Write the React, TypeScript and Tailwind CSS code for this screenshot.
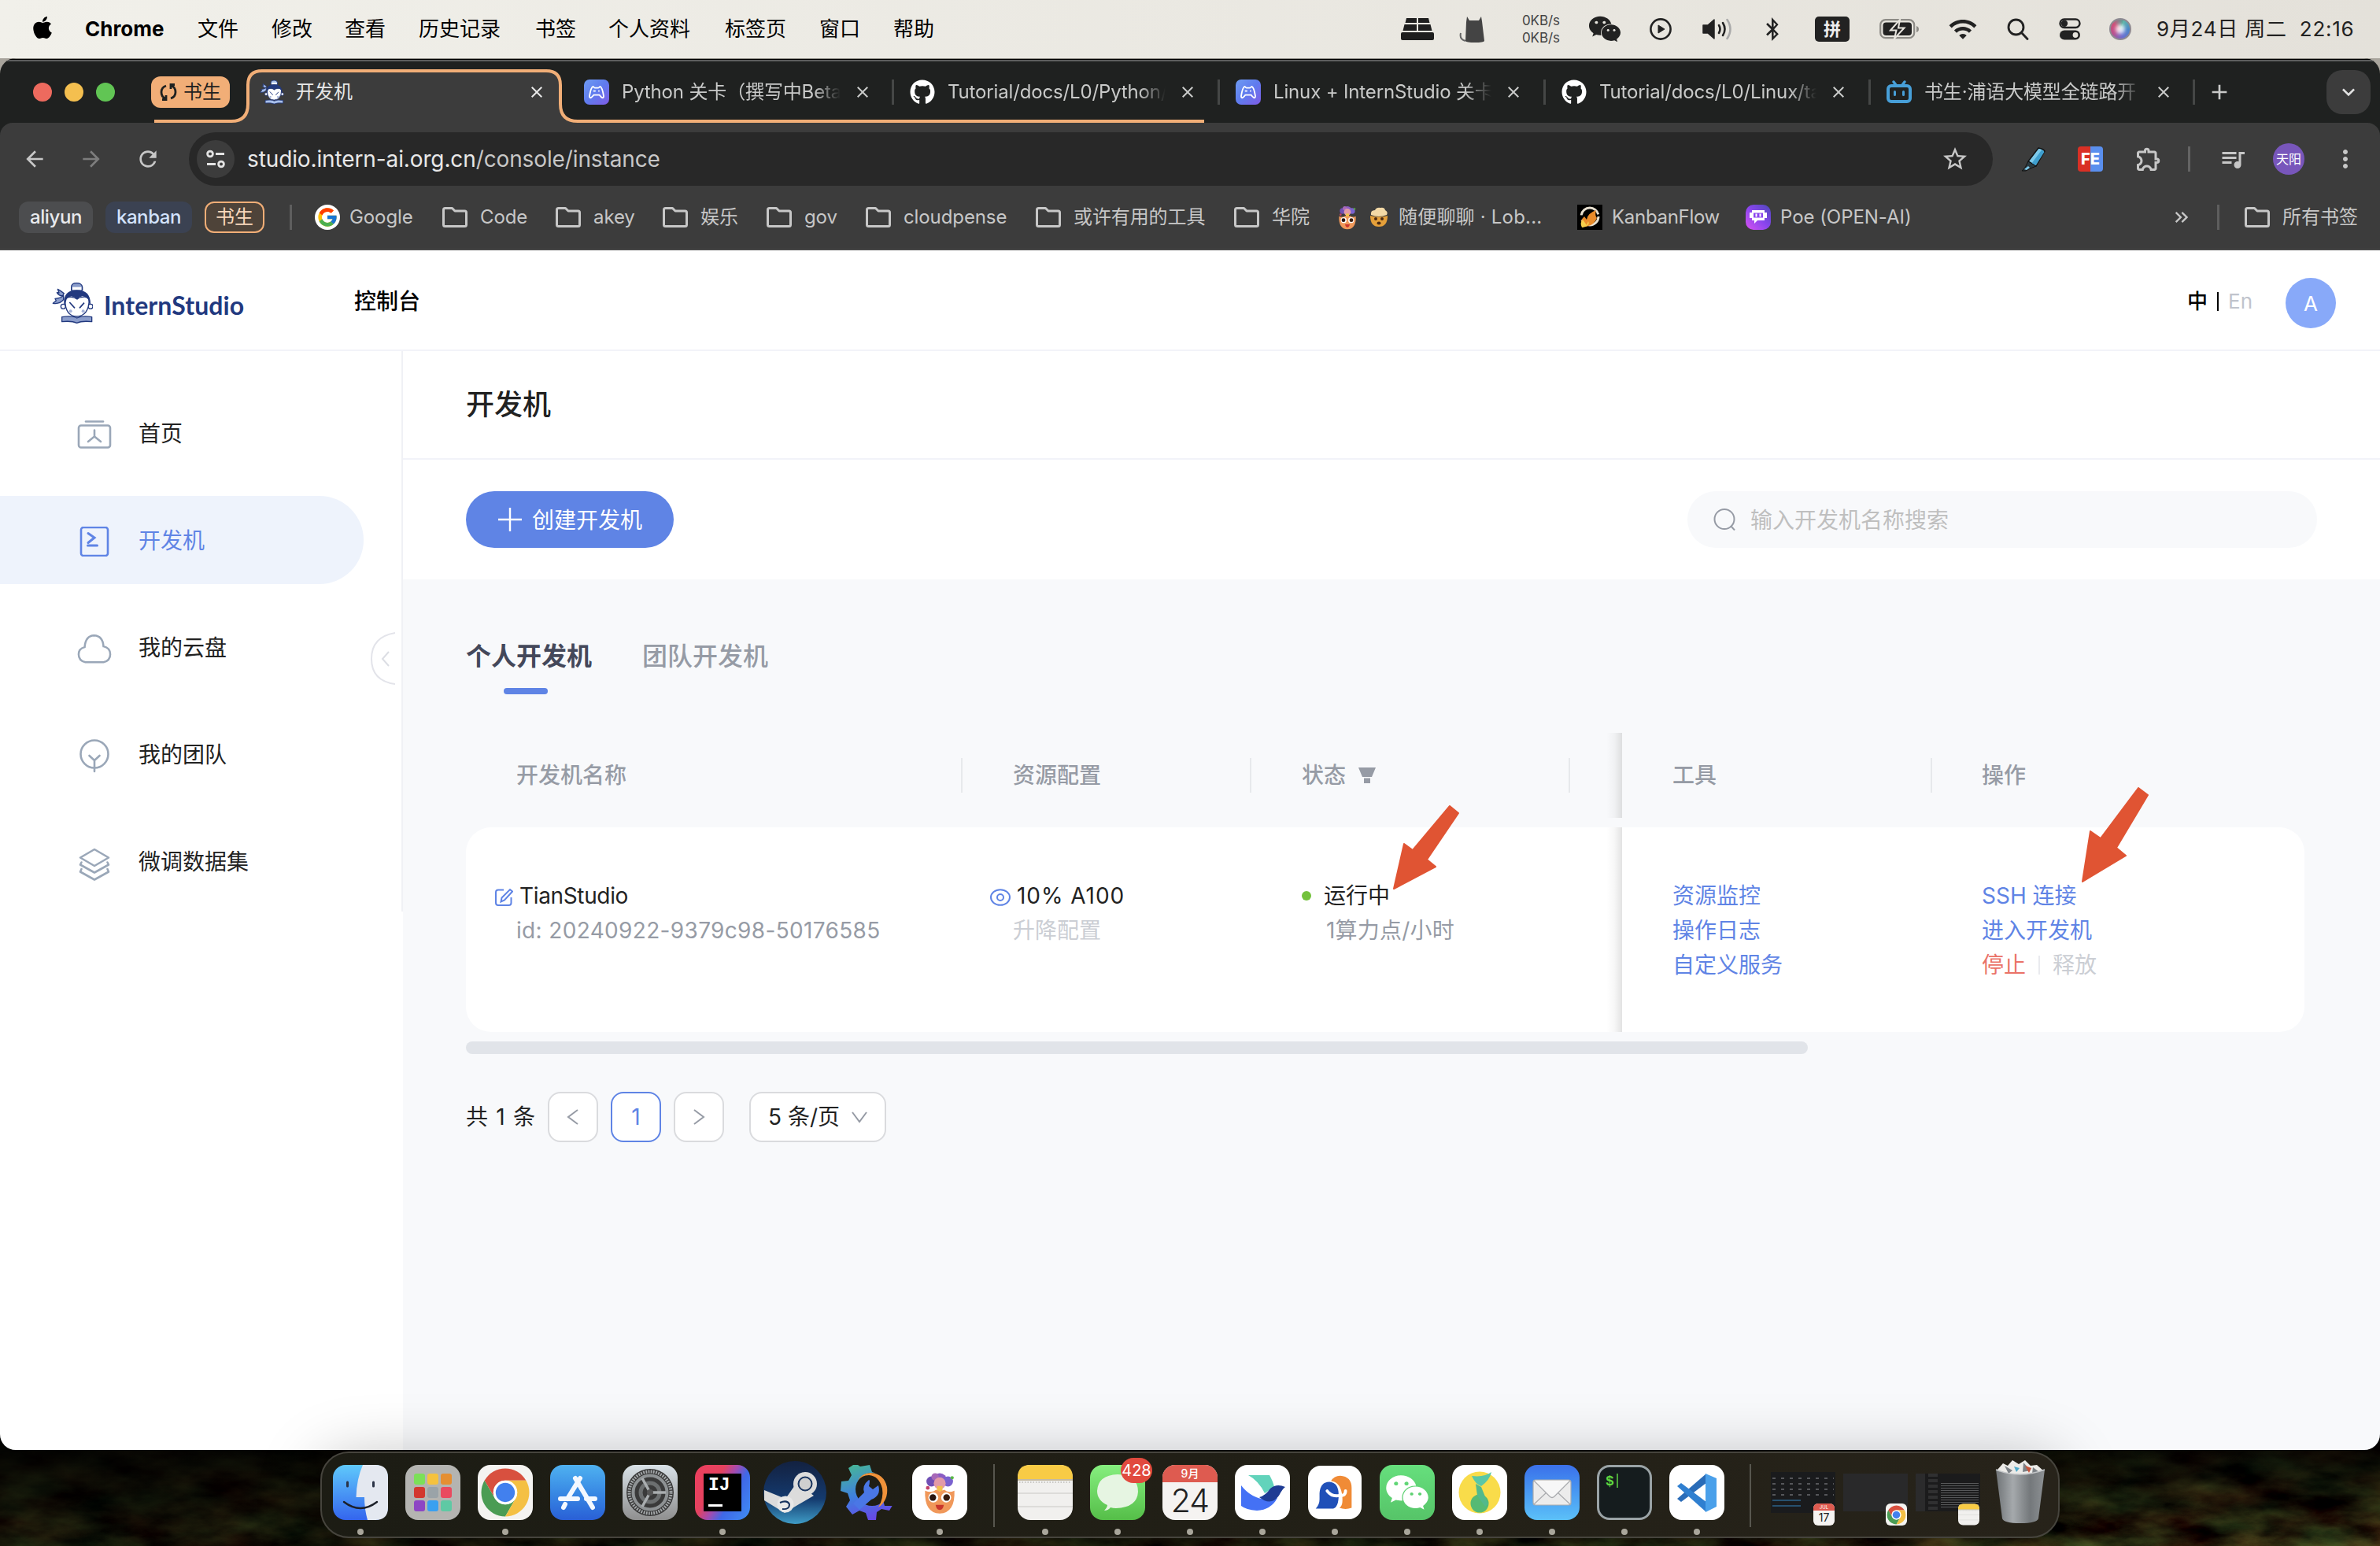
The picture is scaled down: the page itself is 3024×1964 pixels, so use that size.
import React from "react";
import type { ReactNode } from "react";
import { FaApple, FaGithub, FaWeixin, FaBluetoothB } from "react-icons/fa";
import { FcGoogle } from "react-icons/fc";
import {
  MdArrowBack,
  MdArrowForward,
  MdRefresh,
  MdClose,
  MdAdd,
  MdStarBorder,
  MdOutlineExtension,
  MdQueueMusic,
  MdMoreVert,
  MdKeyboardArrowDown,
  MdKeyboardDoubleArrowRight,
  MdWifi,
} from "react-icons/md";

/* ---------- shared drawings ---------- */

function Scholar({ className, light = false }: { className: string; light?: boolean }) {
  const band = light ? "#a9c0ea" : "#8b9dcb";
  return (
    <svg viewBox="30 40 156 162" className={className} fill="none" stroke="#22397f" strokeWidth="4" strokeLinejoin="round">
      <path d="M104 72v-12q0-15 20-15t22 15v12z" fill={band} />
      <path d="M108 60h34v12h-34z" fill="#fff" stroke="none" />
      <path d="M76 84q-12-10-24-16l5 14-8-1q8 14 22 12zM74 92q-8 10-32 12l4 8-12 10q26 4 40-14z" fill={band} />
      <circle cx="73" cy="134" r="9" fill="#fff" />
      <circle cx="177" cy="134" r="9" fill="#fff" />
      <path d="M80 108q0 62 44 64 46-2 48-64-10-14-24-10-14 0-22 8-10-8-22-8-16-2-24 10z" fill="#fff" />
      <path d="M78 124q-4-50 47-51 50 1 50 51l-6-20q-14-14-28-10-10 2-15 10-6-8-18-10-16-2-24 12z" fill="#22397f" />
      <path d="M97 118l20 22M153 120l-18 20" strokeWidth="5" />
      <circle cx="101" cy="152" r="6" fill="#a5b2d8" stroke="none" />
      <circle cx="149" cy="152" r="6" fill="#a5b2d8" stroke="none" />
      <path d="M68 174q40-6 57 4 20-10 57-4v18q-38-4-57 5-20-9-57-5z" fill={band} />
    </svg>
  );
}

function Folder() {
  return (
    <svg viewBox="0 0 32 26" className="h-[26px] w-8 shrink-0" fill="none" stroke="#c7c7c7" strokeWidth="3" strokeLinejoin="round">
      <path d="M1.500 4v18.500q0 2 2 2h25q2 0 2-2V7q0-2-2-2H16l-3.500-3.500H3.500q-2 0-2 2z" />
    </svg>
  );
}

function ChromeMark({ className }: { className: string }) {
  return (
    <svg viewBox="3 3 42 42" className={className}>
      <path d="M41.320 14A20 20 0 0 0 6.680 14L15.340 29A10 10 0 0 1 24 14Z" fill="#d8503f" />
      <path d="M6.680 14A20 20 0 0 0 24 44L32.660 29A10 10 0 0 1 15.340 29Z" fill="#4b9c54" />
      <path d="M24 44A20 20 0 0 0 41.320 14H24A10 10 0 0 1 32.660 29Z" fill="#f4c044" />
      <circle cx="24" cy="24" r="10" fill="#fff" />
      <circle cx="24" cy="24" r="8" fill="#4280ee" />
    </svg>
  );
}

function LobeFace({ className }: { className: string }) {
  return (
    <svg viewBox="0 0 48 48" className={className}>
      <circle cx="24" cy="11" r="8" fill="#8b5cc4" />
      <circle cx="15" cy="12" r="5.500" fill="#6f4fb5" />
      <circle cx="33" cy="12" r="5.500" fill="#7a62cf" />
      <circle cx="19" cy="7" r="4" fill="#a768b8" />
      <circle cx="24" cy="14" r="6.500" fill="#e29aa8" />
      <circle cx="11" cy="19" r="2" fill="#c2416a" />
      <circle cx="37.500" cy="8" r="1.800" fill="#58b847" />
      <path d="M21 17h6v6h-6z" fill="#f2c14a" />
      <path d="M8 22q8 3 12-1l4 2 5-2q4 4 11 1 1 24-16 25Q7 46 8 22z" fill="#f0985a" />
      <circle cx="17" cy="29.500" r="5.400" fill="#fff" />
      <circle cx="31" cy="29.500" r="5.400" fill="#fff" />
      <circle cx="16.500" cy="29.500" r="3.600" fill="#2a1510" />
      <circle cx="31.500" cy="29.500" r="3.600" fill="#3a1d10" />
      <path d="M19.500 37.500h9q-1 5.500-4.500 5.500t-4.500-5.500z" fill="#c9362c" />
    </svg>
  );
}

function GamePad() {
  return (
    <div className="flex size-8 shrink-0 items-center justify-center rounded-[7px] bg-linear-to-br from-[#6f9bf2] via-[#5f7bee] to-[#7d5be6]">
      <svg viewBox="0 0 24 20" className="h-[18px] w-6" fill="none" stroke="#fff" strokeWidth="2" strokeLinejoin="round" strokeLinecap="round">
        <path d="M7 2q1.500 2 2.500 2h5q1 0 2.500-2 3 1 5 13.500Q22 18.500 20 18q-2-1-4-4H8q-2 3-4 4-2 .5-2-2.500Q4 3 7 2z" />
        <path d="M8 8.500h2M15 8.500h.5" strokeWidth="1.800" />
      </svg>
    </div>
  );
}

function BiliTv() {
  return (
    <svg viewBox="0 0 32 32" className="size-8 shrink-0" fill="none" stroke="#479fd8" strokeLinecap="round">
      <path d="M9 3l3 4M23 3l-3 4" strokeWidth="3.500" />
      <rect x="2" y="8" width="28" height="20" rx="4" strokeWidth="4" />
      <path d="M10.500 15.500v4M21.500 15.500v4" strokeWidth="3" />
    </svg>
  );
}

/* ---------- menu bar ---------- */

const menus = [
  { label: "Chrome", cls: "w-[143px] font-bold" },
  { label: "文件", cls: "w-[94px]" },
  { label: "修改", cls: "w-[93px]" },
  { label: "查看", cls: "w-[94px]" },
  { label: "历史记录", cls: "w-[148px]" },
  { label: "书签", cls: "w-[93px]" },
  { label: "个人资料", cls: "w-[148px]" },
  { label: "标签页", cls: "w-[120px]" },
  { label: "窗口", cls: "w-[94px]" },
  { label: "帮助", cls: "w-[95px]" },
];

function MenuBar() {
  return (
    <div className="relative flex h-[74px] shrink-0 items-center bg-linear-to-r from-[#f1f0ea] to-[#e4e1da] pb-px text-[26px] whitespace-nowrap text-black">
      <div className="w-[108px] pl-[38px]">
        <FaApple className="-mt-1 size-8" />
      </div>
      {menus.map((m) => (
        <div key={m.label} className={"shrink-0 " + m.cls}>
          {m.label}
        </div>
      ))}
      <div className="ml-auto flex items-center text-[#222]">
        <div className="w-[74px]">
          <svg viewBox="0 0 42 28" className="h-7 w-[42px]" fill="#1e1e1e">
            <path d="M7 0h13v6H5.500zM22 0h13l1.500 6H22zM4.500 8H20v8H2.500zM22 8h15.500l2 8H22z" />
            <rect y="18" width="42" height="10" rx="2" />
          </svg>
        </div>
        <div className="w-[80px]">
          <svg viewBox="0 0 34 34" className="size-[34px]" fill="#444">
            <path d="M10 1l3 5h12l3-5 1 6 3 25q-1 2-12 2-11 0-12-2L9 8z" />
            <path d="M8 32Q0 30 2 22" fill="none" stroke="#666" strokeWidth="2" />
          </svg>
        </div>
        <div className="flex w-[86px] flex-col text-[17px] leading-[22px] tracking-[-0.1px] text-[#444]">
          <span>0KB/s</span>
          <span>0KB/s</span>
        </div>
        <div className="w-[76px]">
          <FaWeixin className="-ml-0.5 size-[42px]" />
        </div>
        <div className="w-[67px]">
          <svg viewBox="0 0 28 28" className="size-7" fill="none" stroke="#222" strokeWidth="2.600">
            <circle cx="14" cy="14" r="12.600" />
            <path d="M11 9l8 5-8 5z" fill="#222" strokeWidth="1" />
          </svg>
        </div>
        <div className="w-[80px]">
          <svg viewBox="0 0 38 28" className="h-7 w-[38px]" fill="none" stroke="#222" strokeWidth="2.600" strokeLinecap="round">
            <path d="M1 9h6l8-7v24l-8-7H1z" fill="#222" stroke="#222" strokeWidth="1.500" strokeLinejoin="round" />
            <path d="M21 9q3 5 0 10M26 6q5 8 0 16" />
            <path d="M31.500 2q8 12 0 24" stroke="#aaa" />
          </svg>
        </div>
        <div className="w-[63px]">
          <FaBluetoothB className="-ml-[3px] h-[30px] w-6" />
        </div>
        <div className="w-[82px]">
          <div className="flex h-8 w-11 items-center justify-center rounded-[5px] bg-[#222] text-[22px] leading-none font-bold text-[#eee]">拼</div>
        </div>
        <div className="w-[88px]">
          <svg viewBox="0 0 50 26" className="h-[26px] w-[50px]">
            <rect x="1.200" y="1.200" width="43" height="23" rx="6.500" fill="none" stroke="#8d8b86" strokeWidth="2.200" />
            <rect x="4.500" y="4.500" width="36.500" height="16.500" rx="4" fill="#222" />
            <path d="M47 9v8q3-1 3-4t-3-4z" fill="#8d8b86" />
            <path d="M26 1L14 14.500h7.500L19 25l12.500-13.500H24z" fill="#222" stroke="#e8e5de" strokeWidth="2" />
          </svg>
        </div>
        <div className="w-[75px]">
          <MdWifi className="-ml-px size-[38px]" />
        </div>
        <div className="w-[66px]">
          <svg viewBox="0 0 28 28" className="-ml-px size-7" fill="none" stroke="#222" strokeWidth="2.800" strokeLinecap="round">
            <circle cx="11.500" cy="11.500" r="9.500" />
            <path d="M18.500 18.500l7.500 8" />
          </svg>
        </div>
        <div className="w-[63px]">
          <svg viewBox="0 0 28 28" className="-ml-px size-7" fill="none" stroke="#222" strokeWidth="2.400">
            <rect x="1.500" y="1.500" width="25" height="10.500" rx="5.250" />
            <circle cx="7" cy="6.750" r="3" fill="#222" />
            <rect x="1" y="15.500" width="26" height="12" rx="6" fill="#222" stroke="none" />
            <circle cx="21" cy="21.500" r="3.400" fill="#e6e3dc" stroke="none" />
          </svg>
        </div>
        <div className="w-[60px]">
          <div className="size-7 rounded-full border-2 border-[#8e8a92] bg-[conic-gradient(from_20deg,#5fb8a8,#4a86c8,#6b6fd0,#b9508f,#cf4f78,#58a59a)] p-1.5">
            <div className="size-3 rounded-full bg-white/80 blur-[2px]" />
          </div>
        </div>
        <div className="w-[284px] tracking-[0.75px]">9月24日 周二&nbsp; 22:16</div>
      </div>
    </div>
  );
}

/* ---------- browser chrome ---------- */

const tabs = [
  { icon: "pad", title: "Python 关卡（撰写中Beta", cls: "w-[423px] pl-[29px]", text: "w-[278px]" },
  { icon: "git", title: "Tutorial/docs/L0/Python/", cls: "w-[414px] pl-5", text: "w-[277px]" },
  { icon: "pad", title: "Linux + InternStudio 关卡", cls: "w-[414px] pl-5", text: "w-[277px]" },
  { icon: "git", title: "Tutorial/docs/L0/Linux/ta", cls: "w-[413px] pl-5", text: "w-[276px]" },
  { icon: "bili", title: "书生·浦语大模型全链路开", cls: "w-[412px] pl-5", text: "w-[276px]" },
];

function TabStrip() {
  return (
    <div className="relative flex h-[78px] shrink-0 items-center text-[24px] whitespace-nowrap text-[#c9cac9]">
      <svg viewBox="196 3 1336 78" className="absolute top-0 left-[196px] h-[78px] w-[1336px]">
        <path d="M294 82Q315 79 315 57V33Q315 15 333 15H694Q712 15 712 33V57Q712 79 734 82Z" fill="#3c3c3c" />
        <path d="M196 79H294Q315 79 315 57V33Q315 15 333 15H694Q712 15 712 33V57Q712 79 734 79H1530" fill="none" stroke="#f1ae77" strokeWidth="4" />
      </svg>
      <div className="flex w-[192px] gap-4 pl-[42px]">
        <div className="size-6 rounded-full bg-[#ed6a5e]" />
        <div className="size-6 rounded-full bg-[#f4bf4f]" />
        <div className="size-6 rounded-full bg-[#61c554]" />
      </div>
      <div className="flex h-10 w-[100px] items-center justify-center gap-2 rounded-xl bg-[#f1ae77] text-[#1f2120]">
        <svg viewBox="0 0 22 22" className="h-[22px] w-[22px]" fill="none" stroke="#1f2120" strokeWidth="2.800">
          <path d="M8 3Q2 5 2 11t5 8M3 20.500h5V15M14 19q6-2 6-8t-5-8M19 1.500h-5V7" />
        </svg>
        <span className="-mt-px">书生</span>
      </div>
      <div className="relative flex w-[421px] items-center pl-[37px] text-[#e8e8e8]">
        <Scholar className="size-8" light />
        <span className="-mt-px ml-[15px] w-[294px]">开发机</span>
        <MdClose className="size-6" />
      </div>
      {tabs.map((t) => (
        <div key={t.title} className={"flex shrink-0 items-center " + t.cls}>
          {t.icon === "pad" ? <GamePad /> : t.icon === "git" ? <FaGithub className="size-8 shrink-0 text-white" /> : <BiliTv />}
          <div className={"-mt-px ml-4 shrink-0 overflow-hidden tracking-[-0.15px] [mask-image:linear-gradient(to_right,black_88%,transparent)] " + t.text}>{t.title}</div>
          <MdClose className="ml-4 size-6 shrink-0" />
          <div className="ml-auto h-8 w-[3px] bg-[#454746]" />
        </div>
      ))}
      <MdAdd className="ml-[15px] size-8" />
      <div className="mr-3 ml-auto flex size-14 items-center justify-center rounded-[20px] bg-[#3c3c3c] text-[#e3e3e3]">
        <MdKeyboardArrowDown className="size-8" />
      </div>
    </div>
  );
}

function Toolbar() {
  return (
    <div className="flex h-[92px] shrink-0 items-center rounded-t-2xl bg-[#3c3c3c] text-[#c7c7c7]">
      <MdArrowBack className="ml-7 size-8" />
      <MdArrowForward className="ml-10 size-8 text-[#7d7d7d]" />
      <MdRefresh className="ml-10 size-8" />
      <div className="ml-9 flex h-[68px] w-[2292px] items-center rounded-full bg-[#282828] pl-[10px]">
        <div className="flex size-12 items-center justify-center rounded-full bg-[#3c3c3c]">
          <svg viewBox="0 0 24 24" className="size-6" fill="none" stroke="#e3e3e3" strokeWidth="2.800">
            <circle cx="5" cy="5.500" r="3.400" />
            <path d="M12 5.500h11M1 18.500h11" />
            <circle cx="19" cy="18.500" r="3.400" />
          </svg>
        </div>
        <div className="ml-4 text-[28px] tracking-[-0.12px] text-[#c7c7c7]">
          <span className="text-[#e8e8e8]">studio.intern-ai.org.cn</span>/console/instance
        </div>
        <MdStarBorder className="mr-[30px] ml-auto size-9" />
      </div>
      <svg viewBox="0 0 32 32" className="ml-9 size-8">
        <path d="M22 2q6 1 8 4L19 25l-10-6z" fill="#7cc9ea" stroke="#111" strokeWidth="1.500" />
        <path d="M26.500 4L13.500 21.500l5 3L29.500 7z" fill="#3f9fce" />
        <path d="M9 19l10 6-7 3-6 3H1l4-4z" fill="#2c3a40" stroke="#111" />
        <path d="M4 29l5-4 2 2-4 3z" fill="#7cc9ea" />
      </svg>
      <div className="ml-10 flex size-8 items-center justify-center rounded bg-linear-to-r from-[#d93025] from-50% to-[#5a8fee] to-50% text-[20px] leading-none font-extrabold text-white">FE</div>
      <MdOutlineExtension className="ml-10 size-9" />
      <div className="ml-8 h-8 w-[3px] bg-[#646464]" />
      <MdQueueMusic className="ml-9 size-9" />
      <div className="ml-[33px] flex size-10 items-center justify-center rounded-full bg-[#7856bb] text-[16px] leading-none text-white">天阳</div>
      <MdMoreVert className="ml-[34px] size-9" />
    </div>
  );
}

const folders = [
  { label: "Code", cls: "w-[144px]" },
  { label: "akey", cls: "w-[136px]" },
  { label: "娱乐", cls: "w-[132px]" },
  { label: "gov", cls: "w-[126px]" },
  { label: "cloudpense", cls: "w-[216px]" },
  { label: "或许有用的工具", cls: "w-[252px]" },
  { label: "华院", cls: "w-[128px]" },
];

function Bookmarks() {
  return (
    <div className="flex h-[70px] shrink-0 items-start border-b-2 border-[#474747] bg-[#3c3c3c] pt-2 text-[24px] whitespace-nowrap text-[#c7c7c7]">
      <div className="ml-6 flex h-10 w-[94px] items-center justify-center rounded-xl bg-[#4c4d4f] font-medium tracking-[-0.4px] text-[#e8eaed]">aliyun</div>
      <div className="ml-4 flex h-10 w-[110px] items-center justify-center rounded-xl bg-[#3b4252] font-medium tracking-[-0.4px] text-[#d3e3fd]">kanban</div>
      <div className="ml-4 flex h-10 w-[76px] items-center justify-center rounded-xl border-2 border-[#f1ae77] bg-[#4e4339] text-[#fbd9bd]">书生</div>
      <div className="mt-1 ml-8 h-8 w-[3px] bg-[#5e5e5e]" />
      <div className="ml-[29px] flex h-10 w-[162px] items-center">
        <div className="flex size-8 items-center justify-center rounded-full bg-white">
          <FcGoogle className="size-7" />
        </div>
        <span className="ml-3 tracking-[-0.1px]">Google</span>
      </div>
      {folders.map((f) => (
        <div key={f.label} className={"flex h-10 shrink-0 items-center gap-4 " + f.cls}>
          <Folder />
          <span className="tracking-[-0.1px]">{f.label}</span>
        </div>
      ))}
      <div className="flex h-10 w-[308px] items-center">
        <LobeFace className="size-8" />
        <svg viewBox="0 0 24 26" className="ml-3 h-[26px] w-6">
          <path d="M1 11q0 14 11 14t11-14q-10 3-22 0z" fill="#e5a03a" />
          <path d="M2 10q-1-6 5-6 2-4 7-3 5-1 6 3 4 2 2 6-10 4-20 0z" fill="#f3d9a6" />
          <circle cx="8" cy="15" r="2" fill="#4a2a12" />
          <circle cx="16" cy="15" r="2" fill="#4a2a12" />
          <ellipse cx="12" cy="20.500" rx="2.500" ry="2" fill="#4a2a12" />
        </svg>
        <span className="ml-[13px] tracking-[0.2px]">随便聊聊 · Lob...</span>
      </div>
      <div className="flex h-10 w-[214px] items-center">
        <svg viewBox="0 0 32 32" className="size-8 bg-black">
          <circle cx="16" cy="15" r="11" fill="none" stroke="#e8e0d0" strokeWidth="3" strokeDasharray="30 6" />
          <path d="M6 28q-3-8 3-13l3 4q1-8 12-12-2 6 1 10-4 9-11 10-4 2-8 1z" fill="#e98b2a" />
          <path d="M6 29q-3-6 1-10l5 7 2-5q3 6-8 8z" fill="#f6cf4c" />
        </svg>
        <span className="ml-3 tracking-[-0.3px]">KanbanFlow</span>
      </div>
      <div className="flex h-10 items-center">
        <div className="flex size-8 items-center justify-center rounded-[10px] bg-linear-to-tr from-[#d94ff0] via-[#8a45ee] to-[#4b46b8]">
          <svg viewBox="0 0 24 20" className="h-5 w-6">
            <path d="M4 1h16v3h3v7h-3v3h-9l-4 4v-4H4v-3H1V4h3z" fill="#fff" />
            <path d="M6 4.500h12v6H6z" fill="#8a45ee" />
            <path d="M8.500 5.500h2v4h-2zM13.500 5.500h2v4h-2z" fill="#fff" />
          </svg>
        </div>
        <span className="ml-3 tracking-[-0.05px]">Poe (OPEN-AI)</span>
      </div>
      <div className="mr-7 ml-auto flex h-10 items-center">
        <MdKeyboardDoubleArrowRight className="size-7" />
        <div className="ml-[31px] h-8 w-[3px] bg-[#5e5e5e]" />
        <div className="ml-8 flex items-center gap-4">
          <Folder />
          <span>所有书签</span>
        </div>
      </div>
    </div>
  );
}

/* ---------- page ---------- */

function PageHeader() {
  return (
    <div className="flex h-[128px] shrink-0 items-start border-b-2 border-[#f2f3f9] bg-white pl-[66px]">
      <Scholar className="mt-10 h-[54px] w-[52px]" />
      <div className="mt-[50px] ml-[14px] w-[318px] font-['Lato'] text-[32px] leading-[40px] font-bold tracking-[0.1px] text-[#22397f]">InternStudio</div>
      <div className="mt-[45px] text-[28px] leading-[40px] font-medium text-black">控制台</div>
      <div className="mt-[45px] ml-auto flex items-center text-[26px] leading-[40px]">
        <span className="font-medium text-black">中</span>
        <div className="ml-3 h-6 w-[2px] bg-black" />
        <span className="ml-3 w-[73px] text-[#c0c4cc]">En</span>
      </div>
      <div className="mt-[35px] mr-14 flex size-16 items-center justify-center rounded-full bg-[#88a9f9] text-[26px] text-white">A</div>
    </div>
  );
}

function NavItem({ icon, label, active = false }: { icon: ReactNode; label: string; active?: boolean }) {
  return (
    <div
      className={
        active
          ? "mb-6 flex h-28 w-[462px] items-center rounded-r-full bg-[#eef3fc] pl-[98px] text-[#5f84e5]"
          : "mb-6 flex h-28 w-[462px] items-center pl-[98px] text-[#222]"
      }
    >
      <div className="mt-1 flex size-11 items-center justify-center">{icon}</div>
      <span className="mt-px ml-[34px] text-[28px]">{label}</span>
    </div>
  );
}

function Sidebar() {
  return (
    <div className="relative w-[512px] shrink-0 bg-white">
      <div className="h-[712px] border-r-2 border-[#f0f1f5] pt-12">
        <NavItem
          label="首页"
          icon={
            <svg viewBox="0 0 44 38" className="h-[38px] w-11" fill="none" stroke="#9aa7b8" strokeWidth="2.600" strokeLinecap="round">
              <path d="M11 2.500h22" />
              <rect x="2" y="7.500" width="40" height="28" rx="3" />
              <path d="M22 13.500v8l-8 6.500M22 21.500l8 6.500" />
            </svg>
          }
        />
        <NavItem
          active
          label="开发机"
          icon={
            <svg viewBox="0 0 38 38" className="size-[38px]" fill="none" stroke="#5f84e5" strokeWidth="2.600" strokeLinecap="round">
              <rect x="2" y="1" width="34" height="36" rx="3" />
              <path d="M11 8.500l8 5.500-8 6.500M10.500 24h12" strokeWidth="3" />
            </svg>
          }
        />
        <NavItem
          label="我的云盘"
          icon={
            <svg viewBox="0 0 46 40" className="h-10 w-[46px]" fill="none" stroke="#9aa7b8" strokeWidth="2.600">
              <path d="M11 38Q2 36 2 27.500 2 20 10 18 11 3 22.500 2.500 34 3 35 17q9 2 9 10.500T35 38z" />
            </svg>
          }
        />
        <NavItem
          label="我的团队"
          icon={
            <svg viewBox="0 0 40 44" className="h-11 w-10" fill="none" stroke="#9aa7b8" strokeWidth="2.600" strokeLinecap="round">
              <circle cx="20" cy="20" r="17.500" />
              <path d="M20 42V28M13.500 22l6.500 6 6.500-6" />
            </svg>
          }
        />
        <NavItem
          label="微调数据集"
          icon={
            <svg viewBox="0 0 40 42" className="mt-1 h-[42px] w-10 shrink-0" fill="none" stroke="#9aa7b8" strokeWidth="2.600" strokeLinejoin="round" strokeLinecap="round">
              <path d="M20 2l18 10.500L20 23 2 12.500z" />
              <path d="M3.500 18.500L2 21.500 20 31.500l18-10-1.500-3" />
              <path d="M3.500 27L2 30.500 20 40.500l18-10L36.500 27" />
            </svg>
          }
        />
      </div>
      <svg viewBox="0 0 32 68" className="absolute top-[357px] left-[470px] h-[68px] w-8" fill="none" stroke="#e3e4ea" strokeWidth="2">
        <path d="M32 1Q2 6 2 34t30 32" fill="#fff" />
        <path d="M24 25l-8 9 8 9" stroke="#dcdee4" />
      </svg>
    </div>
  );
}

function HeadCell({ cls, children, last = false }: { cls: string; children?: ReactNode; last?: boolean }) {
  return (
    <div className={"flex shrink-0 items-center " + cls}>
      {children}
      {!last && <div className="ml-auto h-11 w-[2px] bg-[#e7e9ec]" />}
    </div>
  );
}

function FixedEdge() {
  return (
    <div className="flex w-[66px] shrink-0 justify-end">
      <div className="w-5 bg-linear-to-r from-transparent via-black/3 to-black/11" />
    </div>
  );
}

function Table() {
  return (
    <div className="mt-[48px] w-[2336px] whitespace-nowrap">
      <div className="flex h-[109px] pt-px text-[28px] font-medium text-[#969ba5]">
        <HeadCell cls="w-[631px] pl-16">开发机名称</HeadCell>
        <HeadCell cls="w-[367px] pl-16">资源配置</HeadCell>
        <HeadCell cls="w-[405px] pl-16">
          状态
          <svg viewBox="0 0 22 20" className="ml-4 h-5 w-[22px]" fill="#969ba5">
            <path d="M0 0h22l-5 12H5zM7 13.500h8V20H7z" />
          </svg>
        </HeadCell>
        <FixedEdge />
        <HeadCell cls="w-[394px] pl-16">工具</HeadCell>
        <HeadCell cls="w-[473px] pl-[63px]" last>
          操作
        </HeadCell>
      </div>
      <div className="mt-3 flex h-[260px] rounded-[32px] bg-white text-[28px] leading-[44px] text-[#222]">
        <div className="w-[631px] pt-[65px]">
          <div className="flex items-center pl-9">
            <svg viewBox="0 0 24 24" className="mt-[3px] size-6" fill="none" stroke="#5f84e5" strokeWidth="2">
              <path d="M12 2.500H5q-3 0-3 3V19q0 3 3 3h13.500q3 0 3-3v-7" />
              <path d="M20 2l3 2.500L13 15.500l-4.500 2 1-5z" />
            </svg>
            <span className="ml-[8px] tracking-[-0.35px]">TianStudio</span>
          </div>
          <div className="pl-16 tracking-[0.34px] text-[#969ba5]">id: 20240922-9379c98-50176585</div>
        </div>
        <div className="w-[367px] pt-[65px]">
          <div className="flex items-center pl-[35px]">
            <svg viewBox="0 0 26 22" className="mt-[3px] h-[22px] w-[26px]" fill="none" stroke="#5f84e5" strokeWidth="2">
              <ellipse cx="13" cy="11" rx="12" ry="9.800" />
              <circle cx="13" cy="11" r="4" />
            </svg>
            <span className="ml-[8px] tracking-[0.95px]">10% A100</span>
          </div>
          <div className="pl-16 text-[#cbced4]">升降配置</div>
        </div>
        <div className="w-[405px] pt-[65px]">
          <div className="flex items-center pl-16">
            <div className="size-3 rounded-full bg-[#73c23c]" />
            <span className="ml-4">运行中</span>
          </div>
          <div className="pl-[95px] tracking-[0.2px] text-[#969ba5]">1算力点/小时</div>
        </div>
        <FixedEdge />
        <div className="w-[394px] pt-[65px] pl-16 text-[#5f84e5]">
          <div>资源监控</div>
          <div>操作日志</div>
          <div>自定义服务</div>
        </div>
        <div className="pt-[65px] pl-[63px] text-[#5f84e5]">
          <div>SSH 连接</div>
          <div>进入开发机</div>
          <div className="flex items-center text-[#cbced4]">
            <span className="text-[#ea7268]">停止</span>
            <div className="mx-4 h-6 w-[2px] bg-[#e9eaee]" />
            <span>释放</span>
          </div>
        </div>
      </div>
      <div className="mt-3 h-4 w-[1705px] rounded-full bg-[#e1e4e9]" />
    </div>
  );
}

function Pagination() {
  return (
    <div className="mt-12 flex h-16 items-center text-[28px] text-[#222]">
      <span className="-mt-px w-[104px] tracking-[1.2px]">共 1 条</span>
      <div className="flex size-16 items-center justify-center rounded-[16px] border-2 border-[#dadbde] bg-white">
        <svg viewBox="0 0 16 22" className="h-[22px] w-4" fill="none" stroke="#969ba5" strokeWidth="2">
          <path d="M14 2L2 11l12 9" />
        </svg>
      </div>
      <div className="ml-4 flex size-16 items-center justify-center rounded-[16px] border-2 border-[#5f84e5] bg-white text-[#5f84e5]">1</div>
      <div className="ml-4 flex size-16 items-center justify-center rounded-[16px] border-2 border-[#dadbde] bg-white">
        <svg viewBox="0 0 16 22" className="h-[22px] w-4" fill="none" stroke="#969ba5" strokeWidth="2">
          <path d="M2 2l12 9-12 9" />
        </svg>
      </div>
      <div className="ml-8 flex h-16 w-[174px] items-center rounded-[16px] border-2 border-[#dadbde] bg-white pl-[22px]">
        <span className="w-[105px]">5 条/页</span>
        <svg viewBox="0 0 22 16" className="h-4 w-[22px]" fill="none" stroke="#969ba5" strokeWidth="2">
          <path d="M2 2l9 12 9-12" />
        </svg>
      </div>
    </div>
  );
}

function Main() {
  return (
    <div className="flex w-[2512px] flex-col bg-[#f8f9fb]">
      <div className="flex h-[138px] shrink-0 items-center border-b-2 border-[#f2f3f9] bg-white pl-20 text-[36px] font-medium text-[#222]">开发机</div>
      <div className="flex h-[152px] shrink-0 items-center justify-between bg-white pr-20 pl-20">
        <div className="flex h-[72px] w-[264px] items-center rounded-full bg-[#5f84e5] pl-[41px] text-[28px] text-white">
          <svg viewBox="0 0 30 30" className="size-[30px]" stroke="#fff" strokeWidth="2.400">
            <path d="M15 0v30M0 15h30" />
          </svg>
          <span className="mt-px ml-[13px]">创建开发机</span>
        </div>
        <div className="flex h-[72px] w-[800px] items-center rounded-full bg-[#f8f9fb] pl-[33px] text-[28px] text-[#bfbfbf]">
          <svg viewBox="0 0 28 28" className="size-7" fill="none" stroke="#969ba5" strokeWidth="2">
            <circle cx="14" cy="13.500" r="12.500" />
            <path d="M22 22l5 5.500" />
          </svg>
          <span className="mt-0.5 ml-[19px]">输入开发机名称搜索</span>
        </div>
      </div>
      <div className="pt-[72px] pl-20">
        <div className="flex gap-[64px] text-[32px] leading-[52px]">
          <div className="flex w-[160px] flex-col text-[#44485a]">
            <span className="font-bold">个人开发机</span>
            <div className="mt-[14px] ml-12 h-2 w-14 rounded-full bg-[#5f84e5]" />
          </div>
          <span className="font-medium text-[#969ba5]">团队开发机</span>
        </div>
        <Table />
        <Pagination />
      </div>
    </div>
  );
}

/* ---------- dock ---------- */

function Tile({ cls, children }: { cls: string; children?: ReactNode }) {
  return <div className={"flex size-[70px] items-center justify-center overflow-hidden rounded-[16px] " + cls}>{children}</div>;
}

function DockItem({ children, open = false }: { children: ReactNode; open?: boolean }) {
  return (
    <div className="relative flex w-[92px] shrink-0 flex-col items-center pt-[15px]">
      <div className="flex h-[70px] items-center justify-center">{children}</div>
      {open && <div className="mt-[11px] size-2 rounded-full bg-[#a9a69b]" />}
    </div>
  );
}

const launch = [
  "bg-[#7be058]", "bg-[#f5c23e]", "bg-[#e58f32]",
  "bg-[#d2382e]", "bg-[#9aa3a8]", "bg-[#e94a5f]",
  "bg-[#8d46c4]", "bg-[#3aa0f0]", "bg-[#5fc9a4]",
];

function NotesFace({ cls }: { cls: string }) {
  return (
    <svg viewBox="0 0 70 70" className={cls}>
      <rect width="70" height="70" rx="16" fill="#f1f0ee" />
      <path d="M0 18V16Q0 0 16 0h38q16 0 16 16v2z" fill="#f8cb45" />
      <path d="M0 19h70" stroke="#b5a98a" strokeWidth="1.500" />
      <path d="M2 22h66" stroke="#c9c8c4" strokeWidth="2" strokeDasharray="1.500 2" />
      <path d="M0 36h70M0 53h70" stroke="#d6d5d2" strokeWidth="1.500" />
    </svg>
  );
}

const gearTeeth = [-35, 55, 100, 145, 190, 235, 280];
const miniRows = Array.from({ length: 6 }, (_, i) => i);

function Dock() {
  return (
    <div className="relative flex h-[110px] w-[2210px] rounded-[36px] border-2 border-[#46443d] bg-linear-to-r from-[#1c1c14] via-[#211f16] to-[#27231a] pl-[3px] shadow-[0_10px_80px_rgba(0,0,0,0.27)]">
      <DockItem open>
        <svg viewBox="0 0 70 70" className="size-[70px]">
          <defs>
            <linearGradient id="finderBlue" x2="0" y2="1">
              <stop stopColor="#5fc9fb" />
              <stop offset="1" stopColor="#3465ee" />
            </linearGradient>
          </defs>
          <rect width="70" height="70" rx="16" fill="url(#finderBlue)" />
          <path d="M38 0q-8 18-8.500 41H40q0 15 4 29h10q16 0 16-16V16Q70 0 54 0z" fill="#e4e8f0" />
          <path d="M18.500 22v5M51.500 22v5" stroke="#2a3346" strokeWidth="3" strokeLinecap="round" />
          <path d="M14 47q21 16 42 0" fill="none" stroke="#1b1f28" strokeWidth="2.400" strokeLinecap="round" />
        </svg>
      </DockItem>
      <DockItem>
        <Tile cls="bg-[#b4b4b1]">
          <div className="grid grid-cols-3 gap-[3.500px]">
            {launch.map((c) => (
              <div key={c} className={"size-[13.500px] rounded-[3px] " + c} />
            ))}
          </div>
        </Tile>
      </DockItem>
      <DockItem open>
        <Tile cls="bg-[#f4f3f1]">
          <ChromeMark className="size-[64px]" />
        </Tile>
      </DockItem>
      <DockItem>
        <Tile cls="bg-linear-to-b from-[#4fb1f0] to-[#2a5fd6]">
          <svg viewBox="0 0 70 70" className="size-[70px]" stroke="#f4f8ff" strokeWidth="6" strokeLinecap="round">
            <path d="M32 17l22 37M38 17L22 43M19 50l-2 4M13 43h22M46 43h11" />
          </svg>
        </Tile>
      </DockItem>
      <DockItem>
        <Tile cls="bg-linear-to-b from-[#d9e2e8] to-[#8f8f8f]">
          <svg viewBox="0 0 70 70" className="size-[70px]" fill="none">
            <circle cx="35" cy="35" r="30" fill="#3a3a3a" />
            <circle cx="35" cy="35" r="26.500" stroke="#a5a9ab" strokeWidth="4" strokeDasharray="1.800 1.400" />
            <circle cx="35" cy="35" r="21.500" stroke="#8e9294" strokeWidth="4" />
            <circle cx="35" cy="35" r="12" stroke="#6c6f70" strokeWidth="5" />
            <path d="M35 35h20M35 35L25 17M35 35L25 53" stroke="#a9adaf" strokeWidth="3.500" />
            <circle cx="35" cy="35" r="4" fill="#555" />
          </svg>
        </Tile>
      </DockItem>
      <DockItem open>
        <Tile cls="bg-[linear-gradient(120deg,#ee3f5e_0%,#e4425f_35%,#a44bb0_50%,#3f68e8_65%,#3f8ef5_100%)]">
          <div className="flex h-12 w-12 flex-col justify-between bg-black px-[6px] pt-[5px] pb-[6px]">
            <span className="font-['Liberation_Mono'] text-[23px] leading-[20px] font-bold text-white">IJ</span>
            <div className="h-[3px] w-[18px] bg-white" />
          </div>
        </Tile>
      </DockItem>
      <DockItem>
        <svg viewBox="0 0 80 80" className="size-20">
          <defs>
            <linearGradient id="steamBlue" x2="0" y2="1">
              <stop stopColor="#132140" />
              <stop offset="0.600" stopColor="#143a6e" />
              <stop offset="1" stopColor="#3f9cc6" />
            </linearGradient>
          </defs>
          <circle cx="40" cy="40" r="40" fill="url(#steamBlue)" />
          <path d="M1 37l27 11 14-20 22 16-24 14-13 8L1 50z" fill="#dcdcdc" />
          <circle cx="53" cy="29" r="15" fill="#dcdcdc" />
          <circle cx="53" cy="29" r="9" fill="#14305c" stroke="#14305c" />
          <circle cx="53" cy="29" r="7.500" fill="#cfcfcf" />
          <circle cx="28" cy="55" r="10.500" fill="#e8e8e8" />
          <path d="M21 53q9-4 12 2 0 7-9 6" fill="none" stroke="#14305c" strokeWidth="2" />
        </svg>
      </DockItem>
      <DockItem>
        <svg viewBox="0 0 70 70" className="size-[70px]">
          <defs>
            <linearGradient id="gearTone" gradientUnits="userSpaceOnUse" x1="20" y1="0" x2="45" y2="70">
              <stop stopColor="#46b39a" />
              <stop offset="0.500" stopColor="#3f7fe0" />
              <stop offset="1" stopColor="#6a45e6" />
            </linearGradient>
            <mask id="gearCut">
              <rect width="70" height="70" fill="#fff" />
              <circle cx="41" cy="31" r="21" fill="#000" />
              <path d="M41 -4l40 0v56l-24 0z" fill="#000" />
            </mask>
          </defs>
          <g mask="url(#gearCut)">
            <path
              d="M26 2l12-2 3 9 9 3 8 12 3 16 8 8-6 10-10-2-6 4-1 10H36l-3-9-8-3-9 5-8-10 5-8-3-9-9-3 1-12 9-1 4-7-4-9 9-6z"
              fill="url(#gearTone)"
            />
          </g>
          <path d="M23 20q4-9 16-10 17 1 21 18 2 17-11 26 7-12 5-24-4-16-17-17-9 0-14 7z" fill="#f0923a" />
          <path d="M17 49l14-14q-3-9 6-16 2 0 0 8l5 4 7-5q4 13-9 18L25 57z" fill="#4a77e6" />
        </svg>
      </DockItem>
      <DockItem open>
        <Tile cls="bg-white">
          <LobeFace className="size-[56px]" />
        </Tile>
      </DockItem>
      <div className="flex w-[42px] shrink-0 justify-center pt-[14px] pl-[3px]">
        <div className="h-[80px] w-[2px] bg-[#57564e]" />
      </div>
      <DockItem open>
        <NotesFace cls="size-[70px]" />
      </DockItem>
      <DockItem open>
        <Tile cls="bg-linear-to-b from-[#86ef7f] to-[#55be48]">
          <svg viewBox="0 0 70 70" className="size-[70px]">
            <path d="M35 12q26 1 26 22-1 20-28 21-4 0-7-1-3 4-8 4 4-4 4-7Q9 45 9 33q1-20 26-21z" fill="#e6f5e2" />
          </svg>
        </Tile>
        <div className="absolute top-[6px] left-[50px] flex h-8 w-10 items-center justify-center rounded-full bg-[#e14a3e] text-[20px] leading-none text-white">428</div>
      </DockItem>
      <DockItem open>
        <div className="flex size-[70px] flex-col items-center overflow-hidden rounded-[16px] bg-[#f5f3f1]">
          <div className="flex h-[22px] w-full shrink-0 items-center justify-center bg-[#de5b50] text-[14px] leading-none font-medium text-white">9月</div>
          <span className="text-[41px] leading-[46px] font-light tracking-[-1px] text-[#222]">24</span>
        </div>
      </DockItem>
      <DockItem open>
        <Tile cls="bg-white">
          <svg viewBox="0 0 70 70" className="size-[70px]">
            <path d="M17 13h27q5 9 6 15L38 36Q30 20 17 13z" fill="#62d3bb" />
            <path d="M8 26q12 16 32 18l14-2Q46 57 28 58 14 57 8 52z" fill="#4471f5" />
            <path d="M31 41q8-2 14-11 8-7 19-2-4 3-8 11-10 14-25 2z" fill="#1f3c94" />
          </svg>
        </Tile>
      </DockItem>
      <DockItem open>
        <div className="flex size-[68px] items-center justify-center overflow-hidden rounded-[16px] bg-white">
          <svg viewBox="0 0 70 70" className="size-[68px]">
            <path d="M30 20q4-7 12-7 15 1 15 16v26q-8 3-16 0 6-3 3-20-3-14-14-15z" fill="#f08b36" />
            <path d="M15 36q1-15 13-15 12 1 12 17 0 16-7 18H10q5-5 5-12z" fill="#2050b8" />
            <path d="M25 33q6 8 16 6 8 1 8-6" fill="none" stroke="#fff" strokeWidth="4" strokeLinecap="round" />
          </svg>
        </div>
      </DockItem>
      <DockItem open>
        <Tile cls="bg-linear-to-b from-[#66df7d] to-[#56c468]">
          <FaWeixin className="size-[56px] text-white" />
        </Tile>
      </DockItem>
      <DockItem open>
        <Tile cls="bg-white">
          <svg viewBox="0 0 70 70" className="size-[70px]">
            <circle cx="35" cy="35" r="26.500" fill="#f9dc4a" />
            <circle cx="35" cy="49" r="11.500" fill="#56ba74" />
            <path d="M30 24l7 4 9 22-4 3-10-14z" fill="#52b98c" />
            <path d="M25 14q16 2 25-5-2 10-13 18-7-2-12-13z" fill="#5ac7a6" />
          </svg>
        </Tile>
      </DockItem>
      <DockItem open>
        <Tile cls="bg-linear-to-b from-[#3b70ea] to-[#5cc0f8]">
          <svg viewBox="0 0 70 70" className="size-[70px]" stroke="#a9abae" strokeWidth="1.200">
            <rect x="11" y="19" width="48" height="32" rx="3" fill="#ececec" />
            <path d="M12 50l17-16M58 50L41 34" />
            <path d="M12 20l20 20q3 3 6 0l20-20" fill="#f7f7f7" />
          </svg>
        </Tile>
      </DockItem>
      <DockItem open>
        <div className="flex size-[70px] rounded-[16px] border-[3px] border-[#9aa3a6] bg-[#151c1e] pt-[8px] pl-[8px] font-['Liberation_Mono'] text-[18px] leading-[20px] font-bold whitespace-nowrap text-[#5fd840]">
          $<span className="ml-[3px] h-[18px] w-[2px] bg-[#4aa33a]" />
        </div>
      </DockItem>
      <DockItem open>
        <Tile cls="bg-white">
          <svg viewBox="0 0 70 70" className="size-[70px]">
            <path d="M10 43l5 4L47 23V11z" fill="#2a6cb8" />
            <path d="M10 27l5-4 32 24v13z" fill="#2f7fd0" />
            <path d="M46 11l14 6v36l-14 7z" fill="#4aa0ea" />
            <path d="M46 24v22L32 35z" fill="#fff" />
          </svg>
        </Tile>
      </DockItem>
      <div className="flex w-[43px] shrink-0 justify-center pt-[14px] pl-[1px]">
        <div className="h-[80px] w-[2px] bg-[#57564e]" />
      </div>
      <DockItem>
        <div className="relative h-[52px] w-[82px] bg-[#1a1b1d]">
          <div className="flex flex-col gap-[5px] px-[2px] pt-[7px]">
            {miniRows.map((r) => (
              <div key={r} className={r > 3 ? "h-[2px] w-9 bg-[#27506e]" : "h-[2px] w-[78px] bg-[repeating-linear-gradient(90deg,#55565a_0_4px,#1a1b1d_4px_11px)]"} />
            ))}
          </div>
          <div className="absolute top-[40px] left-[54px] flex h-7 w-[27px] flex-col items-center overflow-hidden rounded-[6px] bg-[#f5f3f1]">
            <span className="flex h-[9px] w-full shrink-0 items-center justify-center bg-[#de5b50] text-[6px] leading-none text-white">JUL</span>
            <span className="text-[14px] leading-[18px] text-[#222]">17</span>
          </div>
        </div>
      </DockItem>
      <DockItem>
        <div className="relative h-12 w-[82px] bg-[#29292a]">
          <div className="absolute top-[38px] left-[54px] flex h-7 w-[27px] items-center justify-center rounded-[6px] bg-[#f4f3f1]">
            <ChromeMark className="size-[25px]" />
          </div>
        </div>
      </DockItem>
      <DockItem>
        <div className="relative h-12 w-[82px] bg-[#1b1b1c]">
          <div className="flex h-12 gap-1">
            <div className="w-3 bg-[#2b2b2c]" />
            <div className="w-3 bg-[repeating-linear-gradient(180deg,#303031_0_4px,#1b1b1c_4px_7px)]" />
            <div className="mt-3 h-8 w-12 bg-[repeating-linear-gradient(180deg,#57585a_0_1px,#1b1b1c_1px_3px)]" />
          </div>
          <div className="absolute top-[38px] left-[54px]">
            <NotesFace cls="h-7 w-[27px]" />
          </div>
        </div>
      </DockItem>
      <DockItem>
        <svg viewBox="0 0 64 82" className="-mt-[2px] h-[82px] w-16 shrink-0">
          <defs>
            <linearGradient id="binSide">
              <stop stopColor="#6f7376" />
              <stop offset="0.350" stopColor="#a5a9ac" />
              <stop offset="0.700" stopColor="#74787b" />
              <stop offset="1" stopColor="#8d9194" />
            </linearGradient>
          </defs>
          <path d="M2 14l8-9 6 3 6-7 8 5 8-5 7 7 8-1 9 8-4 8H6z" fill="#ecebe8" />
          <path d="M12 8l10 6-5 4zM36 4l9 10-10 2zM48 10l8 6-9 2z" fill="#7d8287" />
          <path d="M38 8l8 3-3 6z" fill="#c8543a" />
          <path d="M24 9l7 2-4 5z" fill="#4fa9c9" />
          <path d="M1 13q30 12 62 0l-8 62q-2 6-23 6T9 75z" fill="url(#binSide)" />
          <path d="M1 13q30 12 62 0" fill="none" stroke="#c3c6c8" strokeWidth="1.500" />
        </svg>
      </DockItem>
    </div>
  );
}

function Wallpaper() {
  return (
    <svg className="absolute bottom-0 left-0 h-[144px] w-[3024px]" viewBox="0 0 3024 144" preserveAspectRatio="none">
      <defs>
        <filter id="foliage" x="0" y="0" width="100%" height="100%" colorInterpolationFilters="sRGB">
          <feTurbulence type="fractalNoise" baseFrequency="0.012 0.03" numOctaves="6" seed="7" />
          <feColorMatrix values="0.6 0.25 0 0 -0.250  0.7 0 0 0 -0.190  0.3 0 0 0 -0.090  0 0 0 0 1" />
        </filter>
        <linearGradient id="dusk" x2="0" y2="1">
          <stop stopColor="#000" stopOpacity="0.950" />
          <stop offset="0.350" stopColor="#000" stopOpacity="0.600" />
          <stop offset="1" stopColor="#000" stopOpacity="0.100" />
        </linearGradient>
        <linearGradient id="leftDim">
          <stop stopColor="#000" stopOpacity="0.500" />
          <stop offset="0.700" stopColor="#000" stopOpacity="0.300" />
          <stop offset="1" stopColor="#000" stopOpacity="0" />
        </linearGradient>
      </defs>
      <rect width="3024" height="144" fill="#0c0c05" />
      <rect width="3024" height="144" filter="url(#foliage)" />
      <rect width="3024" height="144" fill="url(#dusk)" />
      <rect width="3024" height="144" fill="url(#leftDim)" />
    </svg>
  );
}

export default function App() {
  return (
    <div className="relative flex h-[1964px] w-[3024px] flex-col overflow-hidden bg-[#a8a49c] font-[Inter,'Noto_Sans_CJK_SC',sans-serif]">
      <Wallpaper />
      <MenuBar />
      <div className="relative flex h-[1768px] shrink-0 flex-col overflow-hidden rounded-[20px] bg-[#1f2120]">
        <div className="h-px shrink-0 bg-[#8a8882]" />
        <div className="h-px shrink-0 bg-black" />
        <div className="h-[2px] shrink-0 bg-[#5c5d5d]" />
        <TabStrip />
        <Toolbar />
        <Bookmarks />
        <PageHeader />
        <div className="flex grow">
          <Sidebar />
          <Main />
        </div>
      </div>
      <div className="mt-[2px] flex shrink-0 justify-center">
        <Dock />
      </div>
      <svg viewBox="0 0 84 107" className="absolute top-[1023px] left-[1770px] h-[107px] w-[84px]" fill="#e05433" stroke="#e05433" strokeWidth="2" strokeLinejoin="round">
        <path d="M1 106L14 49l11 8L72 1l11 9-40 59 11 9z" />
      </svg>
      <svg viewBox="0 0 85 121" className="absolute top-[1000px] left-[2645px] h-[121px] w-[85px]" fill="#e05433" stroke="#e05433" strokeWidth="2" strokeLinejoin="round">
        <path d="M1 120L11 56l13 9L72 1l12 9-40 67 12 10z" />
      </svg>
    </div>
  );
}
